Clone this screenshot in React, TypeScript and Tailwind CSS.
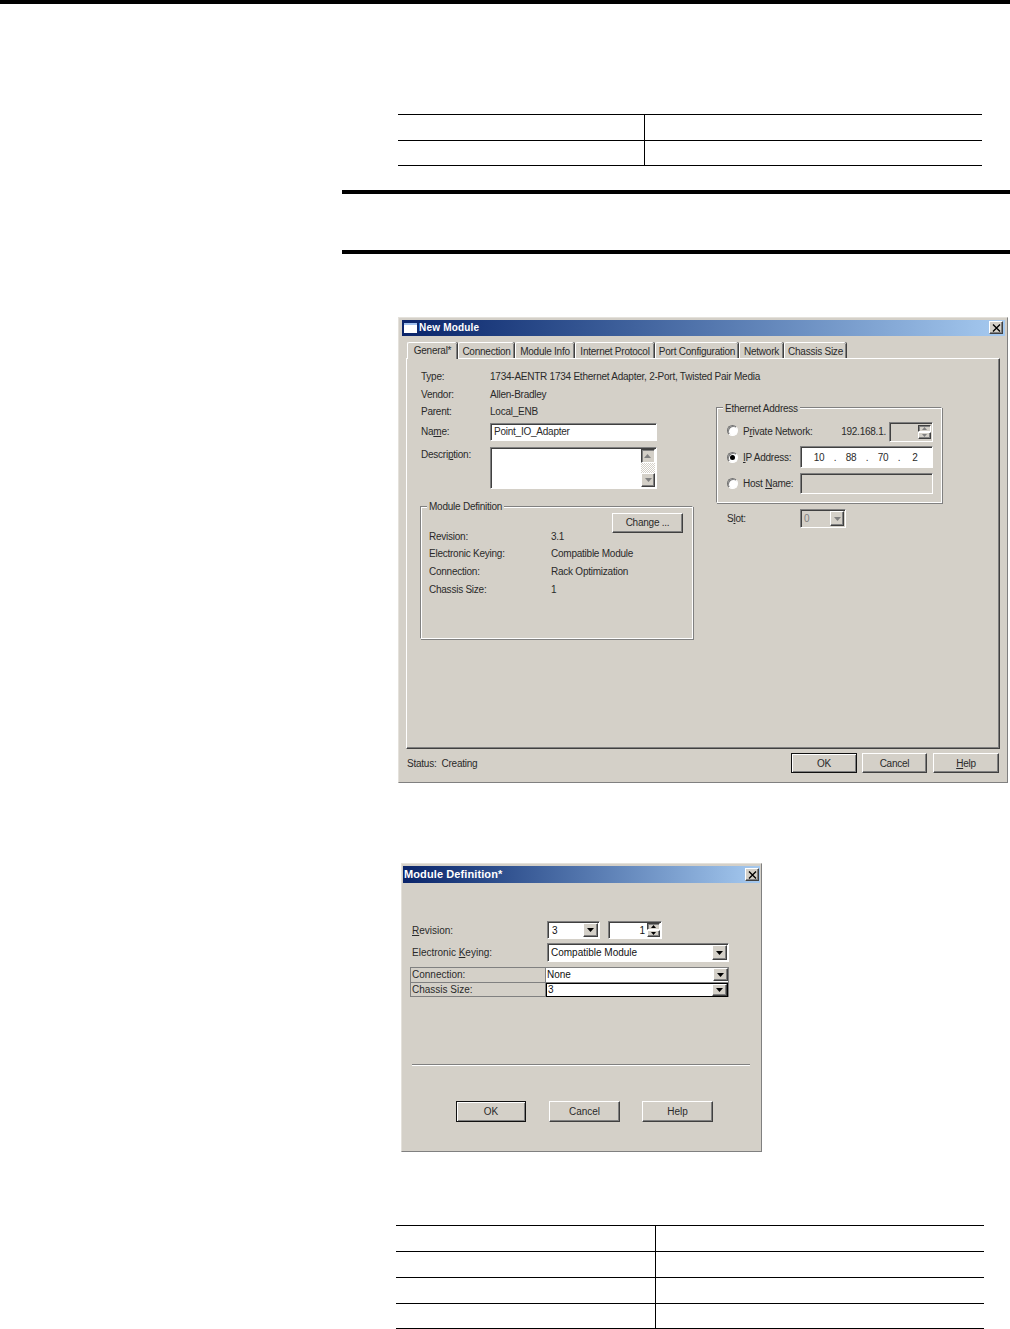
import React from 'react';

const raised = 'border border-t-white border-l-white border-r-[#404040] border-b-[#404040] shadow-[inset_-1px_-1px_0_#808080]';
const sunken = 'border border-t-[#808080] border-l-[#808080] border-r-white border-b-white shadow-[inset_1px_1px_0_#404040]';
const groove = 'border border-t-[#808080] border-l-[#808080] border-r-white border-b-white shadow-[inset_1px_1px_0_#fff,1px_1px_0_#808080]';
const gradient = 'bg-gradient-to-r from-[#0a246a] to-[#a6caf0]';

const Arrow = ({ dir = 'down', color = '#000', size = 7 }: { dir?: 'up' | 'down'; color?: string; size?: number }) => (
  <svg width={size} height={Math.ceil(size / 2)} viewBox="0 0 7 4">
    <path d={dir === 'down' ? 'M0 0H7L3.5 4Z' : 'M0 4H7L3.5 0Z'} fill={color} />
  </svg>
);

const CloseBox = ({ className }: { className: string }) => (
  <div className={`flex items-center justify-center bg-[#d4d0c8] ${raised} ${className}`}>
    <svg width="9" height="8" viewBox="0 0 9 8">
      <path d="M1 0.5L8 7.5M8 0.5L1 7.5" stroke="#000" strokeWidth="1.4" />
    </svg>
  </div>
);

const WinButton = ({ label, className = '', focus = false }: { label: React.ReactNode; className?: string; focus?: boolean }) => (
  <div
    className={`flex items-center justify-center bg-[#d4d0c8] ${
      focus
        ? 'border border-[#111] shadow-[inset_1px_1px_0_#fff,inset_-1px_-1px_0_#808080]'
        : raised
    } ${className}`}
  >
    {label}
  </div>
);

const DropButton = ({ className = '', color = '#000', size = 7 }: { className?: string; color?: string; size?: number }) => (
  <div className={`flex items-center justify-center bg-[#d4d0c8] ${raised} ${className}`}>
    <Arrow color={color} size={size} />
  </div>
);

const Tab = ({ label, width, active = false }: { label: string; width: string; active?: boolean }) => (
  <div
    className={`relative flex items-center justify-center bg-[#d4d0c8] border-l border-t border-white rounded-t-[2px] shadow-[inset_-1px_0_0_#808080,1px_0_0_#404040] ${width} ${
      active ? 'h-[17px] pb-[2px] z-10 mb-[-1px]' : 'h-[16px] pt-[1px]'
    }`}
  >
    {label}
  </div>
);

const InfoRow = ({ label, value, className, valueClass = 'ml-[69px]' }: { label: React.ReactNode; value: string; className: string; valueClass?: string }) => (
  <div className={`flex items-center ${className}`}>
    <span className="w-0 whitespace-nowrap">{label}</span>
    <span className={`whitespace-nowrap ${valueClass}`}>{value}</span>
  </div>
);

const DefRow = ({ label, value, className }: { label: string; value: string; className: string }) => (
  <div className={`flex items-center ${className}`}>
    <span className="w-[122px] whitespace-nowrap">{label}</span>
    <span className="whitespace-nowrap">{value}</span>
  </div>
);

const Radio = ({ checked = false }: { checked?: boolean }) => (
  <div className="flex h-[11px] w-[11px] shrink-0 items-center justify-center rounded-full border border-t-[#707070] border-l-[#707070] border-r-white border-b-white bg-white shadow-[inset_1px_1px_0_#808080]">
    {checked && <div className="h-[5px] w-[5px] rounded-full bg-black" />}
  </div>
);

const PageTable = ({ rows, left, className }: { rows: number[]; left: string; className: string }) => (
  <div className={`flex flex-col border-b border-black ${className}`}>
    {rows.map((h, i) => (
      <div key={i} className={`flex border-t border-black ${h === 26 ? 'h-[26px]' : 'h-[25px]'}`}>
        <div className={`${left} border-r border-black`} />
      </div>
    ))}
  </div>
);

export default function App() {
  return (
    <div className="flex h-[1329px] w-[1010px] flex-col overflow-hidden bg-white font-['Liberation_Sans',Arial,sans-serif] text-[10px] text-[#2a2a2a]">
      <div className="h-[4px] shrink-0 bg-black" />

      <PageTable rows={[26, 25]} left="w-[247px]" className="ml-[398px] mt-[110px] w-[584px]" />

      <div className="ml-[342px] mt-[24px] h-[64px] shrink-0 border-y-4 border-black" />

      {/* New Module dialog */}
      <div className="ml-[398px] mt-[63px] flex h-[466px] w-[610px] shrink-0 flex-col border border-t-[#e4e1db] border-l-[#e4e1db] border-r-[#808080] border-b-[#808080] bg-[#d4d0c8] pl-[3px] pr-[2px] pt-[2px] tracking-[-0.24px]">
        <div className={`flex h-[16px] shrink-0 items-center pb-[1px] pl-[2px] pr-[2px] ${gradient}`}>
          <div className="h-[10px] w-[13px] border-t-2 border-[#9fc0ee] bg-white" />
          <span className="ml-[2px] text-[10px] font-bold tracking-[0.2px] text-white">New Module</span>
          <CloseBox className="ml-auto h-[13px] w-[14px]" />
        </div>

        <div className="ml-[5px] mt-[6px] flex h-[16px] shrink-0 items-end gap-[1px]">
          <Tab label="General*" width="w-[50px]" active />
          <Tab label="Connection" width="w-[56px]" />
          <Tab label="Module Info" width="w-[59px]" />
          <Tab label="Internet Protocol" width="w-[79px]" />
          <Tab label="Port Configuration" width="w-[83px]" />
          <Tab label="Network" width="w-[44px]" />
          <Tab label="Chassis Size" width="w-[62px]" />
        </div>

        <div className="ml-[4px] flex h-[391px] w-[594px] shrink-0 border border-t-white border-l-white border-r-[#404040] border-b-[#404040] shadow-[inset_-1px_-1px_0_#808080]">
          {/* left column */}
          <div className="ml-[13px] flex w-[273px] shrink-0 flex-col pt-[8px]">
            <InfoRow label="Type:" value="1734-AENTR 1734 Ethernet Adapter, 2-Port, Twisted Pair Media" className="ml-[1px] h-[18px]" />
            <InfoRow label="Vendor:" value="Allen-Bradley" className="ml-[1px] h-[18px]" />
            <InfoRow label="Parent:" value="Local_ENB" className="ml-[1px] h-[17px]" />
            <div className="ml-[1px] mt-[3px] flex h-[18px] items-center">
              <span className="mb-[2px] w-[69px]">Na<u>m</u>e:</span>
              <div className={`flex h-[18px] w-[167px] items-center bg-white pb-[1px] pl-[3px] ${sunken}`}>Point_IO_Adapter</div>
            </div>
            <div className="ml-[1px] mt-[6px] flex h-[42px]">
              <span className="w-[69px]">Descri<u>p</u>tion:</span>
              <div className={`flex h-[42px] w-[167px] justify-end bg-white py-[1px] pr-[1px] ${sunken}`}>
                <div className="flex w-[14px] flex-col bg-[repeating-conic-gradient(#d4d0c8_0_25%,#fff_0_50%)] bg-[length:2px_2px]">
                  <DropButton className="h-[14px] rotate-180" color="#808080" />
                  <DropButton className="mt-auto h-[14px]" color="#808080" />
                </div>
              </div>
            </div>

            <div className={`relative mt-[17px] h-[133px] w-[273px] shrink-0 px-[8px] pt-[6px] ${groove}`}>
              <span className="absolute left-[6px] top-[-8px] bg-[#d4d0c8] px-[2px]">Module Definition</span>
              <div className="flex justify-end pr-[1px]">
                <WinButton label="Change ..." className="h-[20px] w-[71px] pb-[1px]" />
              </div>
              <DefRow label="Revision:" value="3.1" className="mt-[-6px] h-[18px]" />
              <DefRow label="Electronic Keying:" value="Compatible Module" className="h-[17px]" />
              <DefRow label="Connection:" value="Rack Optimization" className="h-[18px]" />
              <DefRow label="Chassis Size:" value="1" className="h-[18px]" />
            </div>
          </div>

          {/* right column */}
          <div className="ml-[23px] flex w-[226px] shrink-0 flex-col pt-[48px]">
            <div className={`relative h-[96px] w-[226px] pl-[10px] pr-[8px] pt-[14px] ${groove}`}>
              <span className="absolute left-[6px] top-[-7px] bg-[#d4d0c8] px-[2px]">Ethernet Address</span>
              <div className="flex h-[20px] items-center">
                <div className="mb-[3px]"><Radio /></div>
                <span className="mb-[2px] ml-[5px]">P<u>r</u>ivate Network:</span>
                <span className="mb-[2px] ml-auto">192.168.1.</span>
                <div className={`ml-[3px] flex h-[20px] w-[44px] justify-end pr-[1px] pt-[2px] ${sunken}`}>
                  <div className="flex h-[14px] w-[13px] flex-col">
                    <DropButton className="h-[7px] rotate-180" color="#808080" size={5} />
                    <DropButton className="h-[7px]" color="#808080" size={5} />
                  </div>
                </div>
              </div>
              <div className="mt-[4px] flex h-[22px] items-center">
                <Radio checked />
                <span className="ml-[5px]"><u>I</u>P Address:</span>
                <div className={`ml-auto flex h-[22px] w-[133px] items-center bg-white pl-[10px] ${sunken}`}>
                  {['10', '.', '88', '.', '70', '.', '2'].map((part, i) => (
                    <span key={i} className="w-[16px] text-center">{part}</span>
                  ))}
                </div>
              </div>
              <div className="mt-[5px] flex h-[21px] items-center">
                <Radio />
                <span className="ml-[5px]">Host <u>N</u>ame:</span>
                <div className={`ml-auto h-[21px] w-[133px] ${sunken}`} />
              </div>
            </div>
            <div className="ml-[11px] mt-[6px] flex h-[19px] items-center">
              <span className="mb-[1px] w-[73px]">S<u>l</u>ot:</span>
              <div className={`flex h-[19px] w-[46px] items-center justify-between pl-[3px] pr-[1px] text-[#808080] ${sunken}`}>
                0
                <DropButton className="h-[15px] w-[14px]" color="#808080" />
              </div>
            </div>
          </div>
        </div>

        <div className="ml-[5px] flex h-[32px] items-start pt-[4px]">
          <span className="mt-[3px]">Status:&nbsp; Creating</span>
          <WinButton label="OK" focus className="ml-auto h-[20px] w-[66px]" />
          <WinButton label="Cancel" className="ml-[5px] h-[20px] w-[65px]" />
          <WinButton label={<><u>H</u>elp</>} className="ml-[6px] mr-[6px] h-[20px] w-[66px]" />
        </div>
      </div>

      {/* Module Definition dialog */}
      <div className="ml-[401px] mt-[80px] flex h-[289px] w-[361px] shrink-0 flex-col border border-t-[#e4e1db] border-l-[#e4e1db] border-r-[#808080] border-b-[#808080] bg-[#d4d0c8] pl-[1px] pt-[2px]">
        <div className={`flex h-[17px] w-[357px] shrink-0 items-center pl-[1px] pr-[1px] ${gradient}`}>
          <span className="text-[11px] font-bold tracking-[0.1px] text-white">Module Definition*</span>
          <CloseBox className="ml-auto h-[13px] w-[14px]" />
        </div>

        <div className="ml-[9px] mt-[38px] flex h-[18px] items-center">
          <span className="w-[135px]"><u>R</u>evision:</span>
          <div className={`flex h-[18px] w-[53px] items-center justify-between bg-white pl-[4px] pr-[1px] text-[#111] ${sunken}`}>
            3
            <DropButton className="h-[14px] w-[15px]" />
          </div>
          <div className={`ml-[8px] flex h-[18px] w-[54px] items-center justify-end bg-white pr-[1px] text-[#111] ${sunken}`}>
            <span className="mr-[2px]">1</span>
            <div className="flex h-[14px] w-[13px] flex-col">
              <DropButton className="h-[7px] rotate-180" size={5} />
              <DropButton className="h-[7px]" size={5} />
            </div>
          </div>
        </div>

        <div className="ml-[9px] mt-[4px] flex h-[19px] items-center">
          <span className="w-[135px]">Electronic <u>K</u>eying:</span>
          <div className={`flex h-[19px] w-[182px] items-center justify-between bg-white pl-[3px] pr-[1px] text-[#111] ${sunken}`}>
            Compatible Module
            <DropButton className="h-[15px] w-[15px]" />
          </div>
        </div>

        <div className="ml-[7px] mt-[5px] flex h-[30px] w-[319px] flex-col border border-[#808080]">
          <div className="flex h-[15px] border-b border-[#808080]">
            <span className="w-[135px] pl-[1px] leading-[14px] border-r border-[#808080]">Connection:</span>
            <div className="flex flex-1 items-center justify-between bg-white pl-[1px] pb-[1px] text-[#111]">
              None
              <DropButton className="h-[13px] w-[15px]" />
            </div>
          </div>
          <div className="flex h-[14px]">
            <span className="w-[135px] pl-[1px] leading-[14px] border-r border-[#808080]">Chassis Size:</span>
            <div className="flex flex-1 items-center justify-between border border-black bg-white pl-[1px] pb-[1px] text-[#111]">
              3
              <DropButton className="h-[12px] w-[15px]" />
            </div>
          </div>
        </div>

        <div className="ml-[9px] mt-[67px] h-[2px] w-[338px] border-t border-b border-t-[#808080] border-b-white" />

        <div className="ml-[53px] mt-[35px] flex">
          <WinButton label="OK" focus className="h-[21px] w-[70px]" />
          <WinButton label="Cancel" className="ml-[23px] h-[21px] w-[71px]" />
          <WinButton label="Help" className="ml-[22px] h-[21px] w-[71px]" />
        </div>
      </div>

      <PageTable rows={[26, 26, 26, 25]} left="w-[260px]" className="ml-[396px] mt-[73px] w-[588px]" />
    </div>
  );
}
